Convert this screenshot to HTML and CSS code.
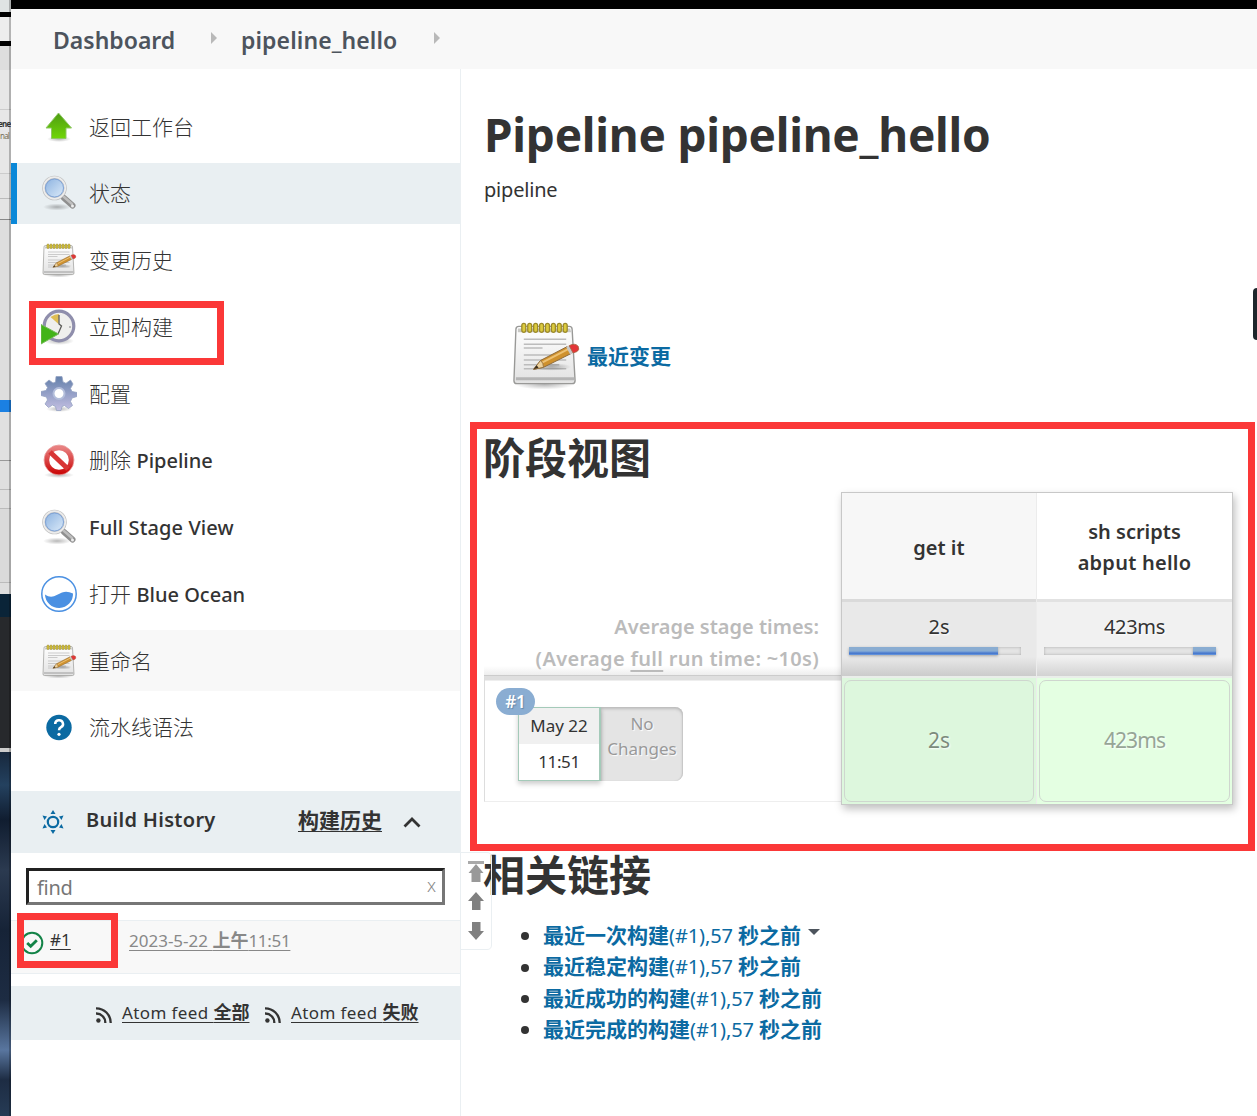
FILE: index.html
```html
<!DOCTYPE html>
<html lang="zh-CN">
<head>
<meta charset="utf-8">
<title>pipeline_hello [Jenkins]</title>
<link rel="stylesheet" href="styles.css">
</head>
<body>
<svg width="0" height="0" class="defs" aria-hidden="true">
  <defs>
    <linearGradient id="green" x1="0" y1="0" x2="0" y2="1"><stop offset="0" stop-color="#4f9c14"/><stop offset="1" stop-color="#6fd606"/></linearGradient>
    <linearGradient id="lens" x1="0" y1="0" x2="1" y2="1"><stop offset="0" stop-color="#86aede"/><stop offset="1" stop-color="#e2effb"/></linearGradient>
    <linearGradient id="paper" x1="0" y1="0" x2="0" y2="1"><stop offset="0" stop-color="#fff"/><stop offset="1" stop-color="#e2e2e2"/></linearGradient>
    <linearGradient id="gear" x1="0" y1="0" x2="0" y2="1"><stop offset="0" stop-color="#6480ab"/><stop offset="1" stop-color="#c4bfe2"/></linearGradient>
    <linearGradient id="red" x1="0" y1="0" x2="0" y2="1"><stop offset="0" stop-color="#e88080"/><stop offset="1" stop-color="#cc0c0c"/></linearGradient>
    <radialGradient id="shade"><stop offset="0" stop-color="#000" stop-opacity=".28"/><stop offset="1" stop-color="#000" stop-opacity="0"/></radialGradient>
    <symbol id="search" viewBox="0 0 36 36">
      <ellipse cx="16" cy="32" rx="14" ry="3.500" fill="url(#shade)"/>
      <path d="M23 23L31.500 30.500" stroke="#8f8f8f" stroke-width="6" stroke-linecap="round"/>
      <path d="M23 22L31 29" stroke="#bdbdbd" stroke-width="2.500" stroke-linecap="round"/>
      <circle cx="31.500" cy="31" r="1.500" fill="#eee"/>
      <circle cx="13.500" cy="13" r="10.800" fill="url(#lens)" stroke="#bdbdbd" stroke-width="3"/>
      <circle cx="13.500" cy="13" r="10.800" fill="none" stroke="#ececec" stroke-width="1.700"/>
      <circle cx="13.500" cy="13" r="9" fill="none" stroke="#7fa3d6" stroke-width="1"/>
    </symbol>
    <symbol id="notepad" viewBox="0 0 72 72">
      <ellipse cx="35" cy="66" rx="30" ry="5" fill="url(#shade)"/>
      <path d="M9 7H60Q63 7 63 10L66 62Q66 65 63 65H7Q4 65 4 62L6 10Q6 7 9 7Z" fill="url(#paper)" stroke="#999997" stroke-width="1.400"/>
      <path d="M8 9H61L62 13H8Z" fill="#c9c9c5"/>
      <path d="M6 60H65" stroke="#b5b5b5" stroke-width="3"/>
      <path d="M14 20H57M14 25H57M14 29H33M14 36H57M14 41H57M14 46H50M14 50H57" stroke="#bcbcbc" stroke-width="1.500"/>
      <g fill="#dccb3d" stroke="#9c8a2a" stroke-width="1.300"><rect x="12" y="4" width="4" height="9" rx="2"/><rect x="18" y="4" width="4" height="9" rx="2"/><rect x="24" y="4" width="4" height="9" rx="2"/><rect x="30" y="4" width="4" height="9" rx="2"/><rect x="36" y="4" width="4" height="9" rx="2"/><rect x="42" y="4" width="4" height="9" rx="2"/><rect x="48" y="4" width="4" height="9" rx="2"/><rect x="54" y="4" width="4" height="9" rx="2"/></g>
      <ellipse cx="42" cy="48" rx="20" ry="4" fill="url(#shade)"/>
      <path d="M24 50.500L31 41.500L58 27.500L62 34.500L34 48.500Z" fill="#cf912e" stroke="#8d6a3a" stroke-width="1"/>
      <path d="M33 43.500L60 29.500" stroke="#edc173" stroke-width="2"/>
      <path d="M24 50.500L31 41.500Q34 44 34 48.500Z" fill="#edd19c" stroke="#8d6a3a" stroke-width=".8"/>
      <path d="M24 50.500L27 46.500L29 49Z" fill="#3b2d1a"/>
      <path d="M57 28L61 26L65 33.500L61 35.500Z" fill="#c8c8c8"/>
      <path d="M60 26.500Q66 23.500 69 27Q71 30.500 68 32.500L64 34Z" fill="#e33538" stroke="#a5623f" stroke-width=".8"/>
    </symbol>
    <symbol id="feed" viewBox="0 0 16 16"><circle cx="2.400" cy="13.500" r="2.200" fill="#333"/><path d="M0 6.500A9 9 0 0 1 9.300 16M0 1.300A14.500 14.500 0 0 1 14.700 16" fill="none" stroke="#333" stroke-width="2.300"/></symbol>
  </defs>
</svg>
<div class="desktop">
  <div class="behind"><b>ene</b><span>nal</span></div>
  <div class="window">
    <div class="topbar"></div>
    <nav class="crumbs"><a class="c1">Dashboard</a><i></i><a class="c2">pipeline_hello</a><i></i></nav>
    <div class="page">
      <aside class="side">
        <ul class="tasks">
          <li><svg viewBox="0 0 36 36"><ellipse cx="18" cy="30" rx="12" ry="3" fill="url(#shade)"/><path d="M17.500 4L30.500 19H25V29.500H10.500V19H5Z" fill="url(#green)" stroke="#8fc765" stroke-width="1"/></svg><span>返回工作台</span></li>
          <li class="active"><svg><use href="#search"/></svg><span>状态</span></li>
          <li><svg><use href="#notepad"/></svg><span>变更历史</span></li>
          <li><svg viewBox="0 0 36 36"><ellipse cx="18" cy="32" rx="15" ry="4" fill="url(#shade)"/><circle cx="18" cy="17" r="14.800" fill="#efefed" stroke="#8f8eac" stroke-width="3.200"/><path d="M17.500 15L9.500 8Q14 5 18 5Z" fill="#dfbd52"/><path d="M18 6V15L20.500 17L17 25" fill="none" stroke="#5c5c58" stroke-width="1.300"/><circle cx="29" cy="18" r="1" fill="#aaa"/><path d="M0 15.500L17.500 25L0 35Z" fill="#42b319" stroke="#77bb5b"/></svg><span>立即构建</span></li>
          <li><svg viewBox="0 0 36 36"><ellipse cx="18" cy="33" rx="13" ry="3" fill="url(#shade)"/><path d="M15 0.500H21L22 6L25 7.300L29.500 4L32 8L29.500 12.500L31 15.500L36 16.500V20.500L31 22L29.500 25.500L31.500 29.500L27.500 32.500L23.500 29.500L21 30.500L20 34.500H15.500L14.500 30.500L11.500 29L7.500 31.500L4 28L6.500 24L5.500 21L0 19.500V15.500L5 14.500L6.500 11.500L4 7.500L8 4L12 7L14.500 6Z" fill="url(#gear)" stroke="#96a3c3" stroke-width=".8"/><circle cx="18" cy="17.500" r="5.500" fill="#fff" stroke="#b3bedb" stroke-width="2"/></svg><span>配置</span></li>
          <li><svg viewBox="0 0 36 36"><ellipse cx="18" cy="33" rx="15" ry="3" fill="url(#shade)"/><circle cx="18" cy="18" r="12.300" fill="#fff" stroke="url(#red)" stroke-width="5"/><path d="M9 10L27 27" stroke="#d83535" stroke-width="5"/><circle cx="18" cy="18" r="15" fill="none" stroke="#e69090" stroke-width=".7"/></svg><span>删除 <em>Pipeline</em></span></li>
          <li><svg><use href="#search"/></svg><span><em class="t2">Full Stage View</em></span></li>
          <li><svg viewBox="0 0 36 36"><circle cx="18" cy="18" r="17.200" fill="#fff" stroke="#4a90e2" stroke-width="1.500"/><path d="M4 18.500C11 23.500 16 18.500 21 16.500Q26 14.500 32 17.500A14 14 0 0 1 4 18.500Z" fill="#4a90e2"/></svg><span class="low">打开 <em>Blue Ocean</em></span></li>
          <li class="hover"><svg><use href="#notepad"/></svg><span>重命名</span></li>
          <li><svg viewBox="0 0 36 36"><circle cx="18" cy="18.500" r="12.700" fill="#0b6aa2"/><path d="M14.200 15A3.900 3.700 0 1 1 20 18.100Q18 19.300 18 21.300" fill="none" stroke="#fff" stroke-width="2.500"/><circle cx="18" cy="25.300" r="1.600" fill="#fff"/></svg><span>流水线语法</span></li>
        </ul>
        <section class="history">
          <header>
            <svg class="sun" viewBox="0 0 24 24"><circle cx="12" cy="12" r="5.200" fill="none" stroke="#0b6aa2" stroke-width="2.200"/><path d="M12 0L14.500 4H9.500ZM12 24L9.500 20H14.500ZM1.500 5.500L6 6.500L3.500 10ZM22.500 5.500L18 6.500L20.500 10ZM1.500 18.500L3.500 14L6 17.500ZM22.500 18.500L20.500 14L18 17.500Z" fill="#0b6aa2"/></svg>
            <b class="bh">Build History</b><a>构建历史</a>
            <svg class="chev" viewBox="0 0 18 12"><path d="M1.500 10.500L9 3L16.500 10.500" fill="none" stroke="#333" stroke-width="2.800"/></svg>
          </header>
          <div class="find"><span>find</span><small>x</small></div>
          <div class="build">
            <svg viewBox="0 0 24 24"><circle cx="12" cy="12" r="10.300" fill="none" stroke="#138347" stroke-width="2"/><path d="M7.200 12L10.700 15.300L16.800 9.200" fill="none" stroke="#138347" stroke-width="2.800"/></svg>
            <a class="num">#1</a><a class="date"><em>2023-5-22 </em><b>上午</b><em class="tm">11:51</em></a>
          </div>
          <footer><svg><use href="#feed"/></svg><a><em>Atom feed </em><b>全部</b></a><svg><use href="#feed"/></svg><a><em>Atom feed </em><b>失败</b></a></footer>
        </section>
      </aside>
      <main>
        <h1>Pipeline pipeline_hello</h1>
        <p class="desc">pipeline</p>
        <div class="recent"><svg><use href="#notepad"/></svg><a>最近变更</a></div>
        <h2>阶段视图</h2>
        <div class="stage">
          <div class="runs">
            <div class="avg"><p>Average stage times:</p><p class="a2">(Average <u>full</u> run time: ~10s)</p></div>
            <div class="run">
              <div class="when"><div class="day">May 22</div><div class="time">11:51</div><span class="badge">#1</span></div>
              <div class="changes"><span>No</span><span>Changes</span></div>
            </div>
          </div>
          <div class="cells">
            <div class="col odd">
              <div class="name"><span>get it</span></div>
              <div class="mean"><span>2s</span><div class="bar"><i style="width:149px"></i></div></div>
              <div class="ok"><span>2s</span></div>
            </div>
            <div class="col">
              <div class="name"><span>sh scripts</span><span class="n3">abput hello</span></div>
              <div class="mean"><span class="ms">423ms</span><div class="bar"><i style="width:23px"></i></div></div>
              <div class="ok"><span class="ms">423ms</span></div>
            </div>
          </div>
        </div>
        <h2 class="rel">相关链接</h2>
        <ul class="links">
          <li>最近一次构建<em>(#1),57 </em>秒之前<i class="caret"></i></li>
          <li>最近稳定构建<em>(#1),57 </em>秒之前</li>
          <li>最近成功的构建<em>(#1),57 </em>秒之前</li>
          <li>最近完成的构建<em>(#1),57 </em>秒之前</li>
        </ul>
      </main>
    </div>
  </div>
  <svg class="pager" viewBox="0 0 31 98"><path d="M0 .5H26Q30.500 .5 30.500 5V93Q30.500 97.500 26 97.500H0" fill="none" stroke="#eaeff2"/><path d="M7 9H23V12H7Z" fill="#aaa"/><path d="M15 12L22.500 21H19.500V30H10.500V21H7.500Z" fill="#999"/><path d="M15 40L23 49H19.500V58H11V49H7Z" fill="#808080"/><path d="M15 88L23 79H19.500V70H11V79H7Z" fill="#808080"/></svg>
  <div class="mark m1"></div><div class="mark m2"></div><div class="mark m3"></div>
  <div class="handle"></div>
</div>
</body>
</html>
```
FILE: styles.css
```css
* { box-sizing: border-box; }
body { margin: 0; font-family: "Noto Sans", "Noto Sans CJK SC", sans-serif; font-size: 20px; color: #333; background: #fff; }
.defs { position: absolute; }
p, h1, h2, ul { margin: 0; padding: 0; }
ul { list-style: none; }
em { font-style: normal; }
svg { display: block; flex: none; }
span, a, b { white-space: pre; }

.desktop { position: relative; display: flex; width: 1257px; height: 1116px; overflow: hidden; }
.behind {
  flex: none; width: 11px; overflow: hidden; padding-top: 118px; font-size: 8px; line-height: 12px;
  background:
    linear-gradient(90deg, transparent 9px, rgba(0,0,0,.24) 9px),
    linear-gradient(#dfe3e3 12px, #000 12px 17px, #ededed 17px 41px, #000 41px 46px, #dedede 46px 70px, #e7e7e7 70px 109px, #ccc 109px 110px, #e7e7e7 110px 173px, #ccc 173px 174px, #e4e4e4 174px 198px, #bbb 198px 199px, #e4e4e4 199px 219px, #888 219px 220px, #dedede 220px 400px, #1b80e2 400px 412px, #e0e0e0 412px 460px, #999 460px 461px, #dfdfdf 461px 489px, #bbb 489px 490px, #dfdfdf 490px 508px, #bbb 508px 509px, #dadada 509px 582px, #bbb 582px 583px, #dedede 583px 594px, #0a2438 594px 617px, #27292c 617px 748px, #ccc 748px 752px, #17283d 752px, #24415f 785px, #101d30 820px, #2b3a50 870px, #162337 930px, #1d2c43 1000px, #59769f 1050px, #1d2c43 1080px, #263b55);
}
.behind b, .behind span { display: block; letter-spacing: -.8px; }
.behind b { margin-left: -2px; }
.behind span { color: #77705a; }
.window { flex: 1; background: #fff; min-width: 0; }
.topbar { height: 9px; background: #000; }

.crumbs { display: flex; align-items: center; height: 60px; padding: 2px 0 0 42px; background: #f8f8f8; color: #4d545d; font-weight: 600; font-size: 23px; line-height: 40px; }
.crumbs i { border: 6px solid transparent; border-left-color: #b9b9b9; border-right: 0; margin-top: -4px; }
.c1 { width: 158px; }
.c2 { width: 192px; margin-left: 24px; letter-spacing: .1px; }
.c2 + i { margin-left: 1px; }
.page { display: flex; height: 1047px; }

.side { flex: none; width: 450px; border-right: 1px solid #eaeff2; padding-top: 27px; }
.tasks { display: flex; flex-direction: column; gap: 5.75px; font-size: 21px; font-weight: 300; }
.tasks li { display: flex; align-items: center; height: 61px; padding-left: 30px; gap: 12px; line-height: 30px; }
.tasks svg { width: 36px; height: 36px; }
.tasks em { font-size: 20px; font-weight: 500; }
.tasks .t2 { letter-spacing: .1px; }
.low { padding-top: 1px; }
.active { background: #e9eff2; box-shadow: inset 6px 0 #0b88d8; }
.hover { background: #f8f8f8; }

.history { padding-top: 33px; }
.history header { display: flex; align-items: center; height: 62px; padding-left: 30px; background: #e9eff2; font-size: 21px; font-weight: 700; line-height: 30px; }
.history header a, .bh { margin-top: -3px; }
.sun { width: 24px; height: 24px; margin-right: 21px; }
.bh { width: 212px; font-size: 20px; font-weight: 600; letter-spacing: .3px; }
.history a { text-decoration: underline; text-underline-offset: 3px; text-decoration-thickness: 1px; }
.chev { width: 18px; height: 12px; margin-left: 21px; }
.find { display: flex; justify-content: space-between; align-items: center; height: 37px; margin: 15px 15px; padding: 4px 6px 0 8px; border: 3px inset #767676; color: #777; line-height: 30px; }
.find span { letter-spacing: -.3px; }
.find small { font-size: 18px; font-weight: 300; line-height: 20px; margin-top: -7px; color: #888; }
.build { display: flex; height: 54px; border: solid #eaeff2; border-width: 1px 0; background: #f8f8f8; padding: 7px 0 0 10px; font-size: 17px; line-height: 24px; }
.build svg { width: 24px; height: 24px; margin: 3px 6px 0 -1px; }
.num { width: 79px; }
.date { color: #888; }
.date b { font-size: 18px; font-weight: 700; }
.date .tm { letter-spacing: -.3px; }
.history footer { display: flex; align-items: center; height: 54px; margin-top: 12px; padding-left: 85px; background: #e9eff2; font-size: 17px; line-height: 26px; }
.history footer svg { width: 16px; height: 16px; margin: 4px 10px 0 0; }
.history footer a { width: 143px; }
.history footer em { letter-spacing: .4px; }
.history footer b { font-size: 18px; }

main { flex: 1; padding: 36px 0 0 23px; }
h1 { font-size: 46px; line-height: 58px; font-weight: 700; white-space: pre; letter-spacing: -.25px; }
.desc { height: 34px; line-height: 34px; margin-top: 10px; letter-spacing: -.2px; }
.recent { display: flex; align-items: center; margin-top: 112px; padding-left: 26px; height: 72px; color: #0b6aa2; font-weight: 700; font-size: 21px; line-height: 30px; }
.recent a { margin-top: 2px; }
.recent svg { width: 71px; height: 72px; margin-right: 6px; }
h2 { font-size: 42px; line-height: 60px; font-weight: 700; margin: 37px 0 0 -1px; height: 64px; }

.stage { display: flex; width: 749px; height: 313px; }
.runs { width: 357px; padding-top: 108px; }
.avg { height: 76px; padding: 11px 22px 0 0; text-align: right; font-weight: 600; color: #bbb; line-height: 32px; background: linear-gradient(#fff0 66px, #ececec); }
.avg p { white-space: pre; }
.avg .a2 { letter-spacing: .32px; }
.avg u { text-underline-offset: 4px; text-decoration-thickness: 2px; }
.run { display: flex; height: 126px; border: 1px solid #eee; border-left-color: #ddd; border-top: 4px solid #dfdfdf; border-right: 0; box-shadow: inset 0 1px #eee, 0 -1px #ccc; padding: 27px 0 0 33px; }
.when { position: relative; width: 83px; height: 74px; border: 1px solid #a4cab9; border-right-width: 2px; font-size: 17px; line-height: 36px; text-align: center; box-shadow: 0 3px 5px rgba(0,0,0,.2); }
.day { height: 36px; background: #f0f0f0; }
.time { letter-spacing: -.4px; }
.badge { position: absolute; left: -23px; top: -20px; width: 39px; height: 27px; border-radius: 14px; background: #8aadd2; color: #fff; font-weight: 600; line-height: 27px; text-shadow: 1px 1px 1px #68a; }
.changes { display: flex; flex-direction: column; align-items: center; width: 82px; height: 74px; padding-top: 4px; border-radius: 0 8px 8px 0; background: #e4e4e4; color: #999; box-shadow: inset 0 2px 3px #bbb, inset -1px 0 1px #ccc; font-size: 17px; line-height: 25px; text-shadow: 1px 1px 1px #fff; }

.cells { display: flex; width: 392px; height: 313px; border: 1px solid #c8c8c8; box-shadow: 2px 4px 8px rgba(0,0,0,.25); }
.col { width: 195px; background: #e4ffe2; }
.odd { border-right: 1px solid #ececec; background: #ddf7dd; }
.name { display: flex; flex-direction: column; align-items: center; justify-content: center; height: 106px; padding-top: 2px; background: #fff; font-weight: 600; line-height: 31px; }
.n3 { letter-spacing: .25px; }
.odd .name { background: #f7f7f7; padding-top: 3px; }
.mean { height: 77px; border-top: 3px solid #e2e2e2; padding: 9px 0 0 7px; background: linear-gradient(#f1f1f1 55px, #d2d2d2); text-shadow: 1px 1px 2px #fff; }
.odd .mean { border-color: #dadada; background: linear-gradient(#e9e9e9 55px, #cbcbcb); }
.mean > span { display: block; text-align: center; line-height: 32px; padding-right: 7px; }
.ms { letter-spacing: -.3px; }
.bar { display: flex; justify-content: flex-end; width: 172px; height: 8px; margin-top: 4px; background: #e4e4e4; box-shadow: inset 0 0 3px #aaa; }
.odd .bar { justify-content: flex-start; }
.bar i { background: linear-gradient(#8aadd2 45%, #6c97d6 65%, #3e6fc8 75%, #6c9ce0); box-shadow: 0 1px 3px rgba(0,0,0,.3); }
.col::after { content: ""; display: block; }
.ok { display: flex; align-items: center; justify-content: center; height: 122px; margin: 4px 2px 2px; border: 1px solid #cfd6cf; border-radius: 7px; color: #96a596; font-size: 21px; padding-bottom: 3px; text-shadow: 1px 1px 2px #fff; }
.odd .ok { color: #7c8b7c; }
.ok .ms { letter-spacing: -.9px; }
.mean { box-shadow: 0 2px #eaeeea; }

h2.rel { margin-top: 40px; height: 75px; }
.links { color: #0b6aa2; font-weight: 700; font-size: 21px; line-height: 31.4px; }
.links li { display: flex; align-items: center; padding-left: 59px; white-space: pre; }
.links li::before { content: ""; width: 8px; height: 8px; border-radius: 50%; background: #333; margin: 1px 14px 0 -22px; }
.links em { font-size: 20px; font-weight: 400; letter-spacing: -.1px; }
.caret { border: 6px solid transparent; border-top-color: #4d545d; border-bottom: 0; margin: -8px 0 0 7px; }

.pager { position: absolute; left: 461px; top: 852px; width: 31px; height: 98px; }
.mark { position: absolute; border: 7px solid #fb3838; }
.m1 { left: 29px; top: 301px; width: 195px; height: 64px; }
.m2 { left: 17px; top: 913px; width: 101px; height: 55px; }
.m3 { left: 470px; top: 422px; width: 785px; height: 429px; }
.handle { position: absolute; right: 0; top: 288px; width: 4px; height: 52px; background: #1d262c; border-radius: 4px 0 0 4px; }
```
